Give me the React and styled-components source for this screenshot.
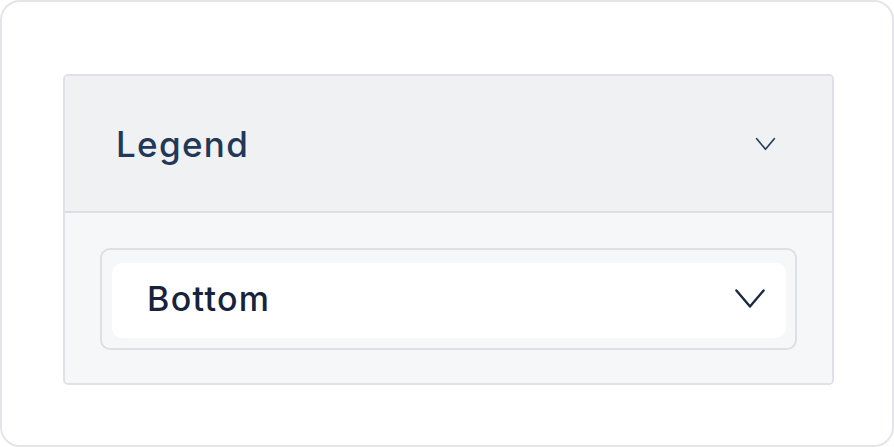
import styled, { createGlobalStyle } from 'styled-components';

const GlobalStyle = createGlobalStyle`
  html, body {
    margin: 0;
    padding: 0;
    background: #ffffff;
  }
  body {
    font-family: Inter, "Noto Sans", sans-serif;
  }
`;

function Chevron({ width, height, stroke, color }) {
  return (
    <svg width={width} height={height} viewBox={`0 0 ${width} ${height}`} fill="none">
      <path
        d={`M${stroke} ${stroke} L${width / 2} ${height - stroke} L${width - stroke} ${stroke}`}
        stroke={color}
        strokeWidth={stroke}
        strokeLinecap="round"
        strokeLinejoin="round"
      />
    </svg>
  );
}

export default function App() {
  return (
    <Frame>
      <GlobalStyle />
      <Panel>
        <Header>
          <Title>Legend</Title>
          <Chevron width={21} height={14} stroke={1.7} color="#27405f" />
        </Header>
        <Body>
          <SelectBox>
            <SelectInner>
              <Value>Bottom</Value>
              <Chevron width={32} height={21} stroke={2.4} color="#1c2a40" />
            </SelectInner>
          </SelectBox>
        </Body>
      </Panel>
    </Frame>
  );
}

const Frame = styled.div`
  box-sizing: border-box;
  width: 894px;
  height: 447px;
  border: 2px solid #e3e5e9;
  border-radius: 20px;
  background: #ffffff;
  padding: 72px 59px 0 61px;
`;

const Panel = styled.div`
  box-sizing: border-box;
  width: 771px;
  height: 311px;
  border: 2px solid #dfe1e6;
  border-radius: 5px;
  overflow: hidden;
  display: flex;
  flex-direction: column;
`;

const Header = styled.div`
  box-sizing: border-box;
  height: 137px;
  flex-shrink: 0;
  background: #f0f1f3;
  border-bottom: 2px solid #dcdee3;
  display: flex;
  align-items: center;
  justify-content: space-between;
  padding: 0 56px 0 51px;
`;

const Title = styled.span`
  font-size: 35px;
  font-weight: 500;
  letter-spacing: 1.3px;
  color: #213858;
`;

const Body = styled.div`
  flex: 1;
  background: #f6f7f9;
  padding: 35px 35px 0 35px;
`;

const SelectBox = styled.div`
  box-sizing: border-box;
  height: 102px;
  border: 2px solid #dcdfe4;
  border-radius: 10px;
  padding: 13px 9px 10px 10px;
`;

const SelectInner = styled.div`
  box-sizing: border-box;
  height: 100%;
  background: #ffffff;
  border-radius: 10px;
  display: flex;
  align-items: center;
  justify-content: space-between;
  padding: 0 20px 4px 35px;
`;

const Value = styled.span`
  font-size: 34px;
  font-weight: 500;
  letter-spacing: 1.3px;
  color: #17233a;
`;
